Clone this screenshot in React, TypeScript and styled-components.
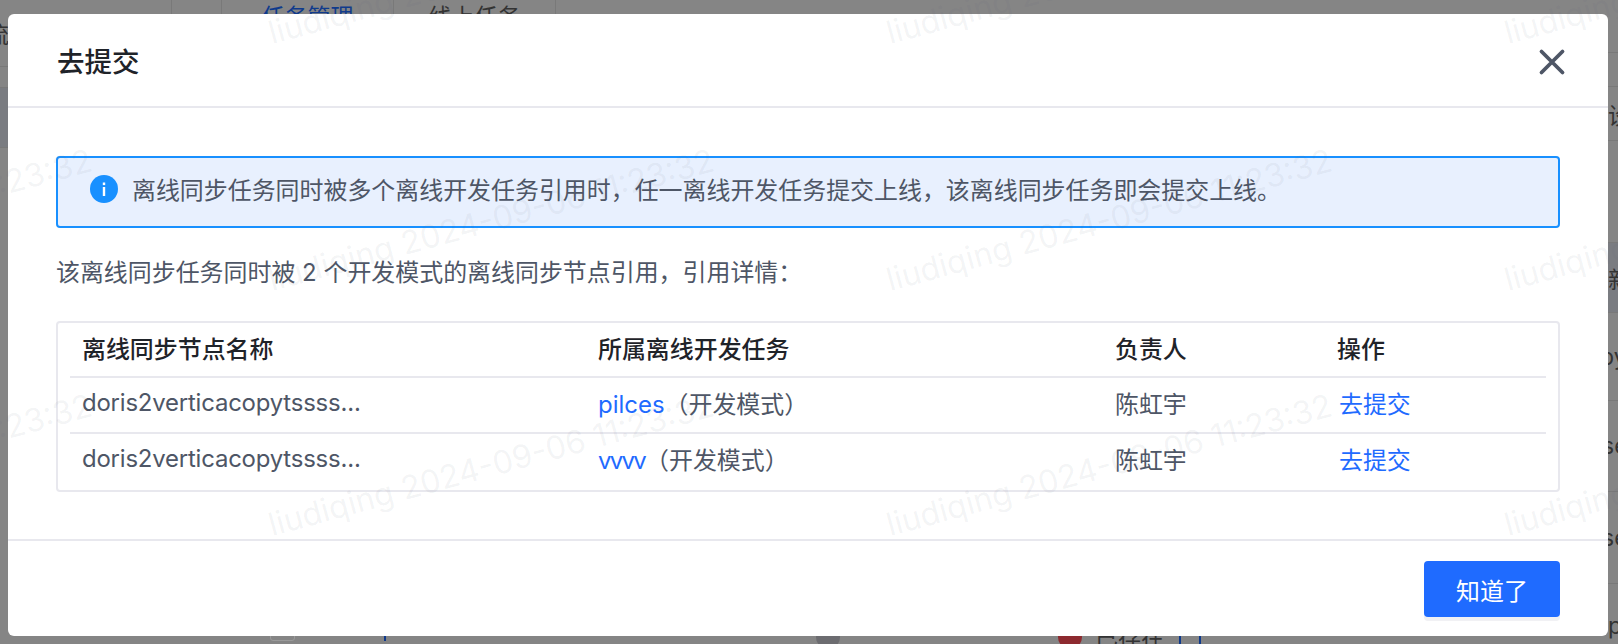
import React from 'react';
import styled, { createGlobalStyle } from 'styled-components';

const GlobalStyle = createGlobalStyle`
  html, body {
    margin: 0;
    padding: 0;
    background: #858585;
  }
`;

const FONT = `Inter, "Noto Sans CJK SC", sans-serif`;

const Page = styled.div`
  position: relative;
  width: 1618px;
  height: 644px;
  overflow: hidden;
  background: #858585;
  font-family: ${FONT};
  padding: 14px 10px 8px 8px;
  box-sizing: border-box;
`;

// dimmed page that shows round the dialog
const Backdrop = styled.div`
  position: absolute;
  inset: 0;
  display: grid;
  grid-template-columns: 8px 1fr 10px;
  grid-template-rows: 14px 1fr 20px;
  grid-template-areas:
    'left top right'
    'left mid right'
    'left bottom right';
  font-size: 23px;
  color: #333;
`;

const TopTabs = styled.div`
  grid-area: top;
  display: flex;
  align-items: stretch;
`;

const TopCell = styled.div<{ $w: number; $blue?: boolean }>`
  width: ${({ $w }) => $w}px;
  box-sizing: border-box;
  border-right: 1px solid #797979;
  display: flex;
  justify-content: center;
  padding-top: 2px;
  line-height: 30px;
  white-space: nowrap;
  color: ${({ $blue }) => ($blue ? '#0f3a8c' : '#333')};
`;

const Edge = styled.div<{ $area: string }>`
  grid-area: ${({ $area }) => $area};
  display: flex;
  flex-direction: column;
  overflow: hidden;
`;

const EdgeRow = styled.div<{ $h: number; $band?: boolean; $indent?: number }>`
  flex: none;
  height: ${({ $h }) => $h}px;
  box-sizing: border-box;
  border-bottom: 1px solid #797979;
  background: ${({ $band }) => ($band ? '#7a7c81' : 'transparent')};
  display: flex;
  align-items: center;
  white-space: nowrap;
  text-indent: ${({ $indent }) => $indent ?? 0}px;
`;

const BottomStrip = styled.div`
  grid-area: bottom;
  display: grid;
  grid-template-columns: 262px 25px 89px 2px 430px 24px 218px 24px 13px 70px 14px 22px;
  align-items: start;
  padding-top: 1px;
`;

const StripBox = styled.i`
  height: 14px;
  border: 1px solid #9a9a9a;
  border-radius: 3px;
`;

const StripBar = styled.i`
  height: 16px;
  background: #0f3a8c;
`;

const StripDot = styled.i<{ $color: string }>`
  height: 24px;
  border-radius: 50%;
  background: ${({ $color }) => $color};
`;

const StripText = styled.span`
  line-height: 26px;
  white-space: nowrap;
`;

const StripCheck = styled.i`
  height: 20px;
  border: 2px solid #0f3a8c;
`;

const Modal = styled.div`
  position: relative;
  height: 100%;
  background: #fff;
  border-radius: 6px;
  display: flex;
  flex-direction: column;
`;

const ModalHeader = styled.header`
  height: 94px;
  flex: none;
  box-sizing: border-box;
  padding: 0 42px 0 49px;
  display: flex;
  align-items: center;
  justify-content: space-between;
  border-bottom: 2px solid #e8e8ee;
`;

const Title = styled.h2`
  margin: 0;
  font-size: 27.5px;
  font-weight: 500;
  color: #1f2329;
`;

const CloseButton = styled.button`
  width: 28px;
  height: 28px;
  margin-top: 4px;
  padding: 0;
  border: 0;
  background: none;
  color: #4e5666;
`;

const ModalBody = styled.div`
  flex: 1;
  padding: 48px 48px 0 48px;
`;

const Alert = styled.div`
  height: 72px;
  box-sizing: border-box;
  border: 2px solid #1890ff;
  border-radius: 4px;
  background: #e8f0fe;
  padding: 16px 32px;
  display: flex;
  gap: 14px;
  color: #4e5666;
  font-size: 23.95px;
  line-height: 34px;
`;

const Intro = styled.p`
  margin: 27px 0 0;
  color: #4e5666;
  font-size: 23.95px;
  line-height: 36px;
`;

const TableCard = styled.div`
  margin-top: 30px;
  border: 2px solid #e8e8ee;
  border-radius: 4px;
  padding: 0 12px 2px;
`;

const Row = styled.div<{ $head?: boolean }>`
  display: grid;
  grid-template-columns: 516px 517px 222px 1fr;
  height: ${({ $head }) => ($head ? 49 : 48)}px;
  padding: 0 0 ${({ $head }) => ($head ? 4 : 6)}px 12px;
  align-items: center;
  color: ${({ $head }) => ($head ? '#1f2329' : '#4e5666')};
  font-weight: ${({ $head }) => ($head ? 500 : 400)};
  font-size: 23.95px;
  & + & {
    border-top: 2px solid #e8e8ee;
  }
`;

const NodeName = styled.span`
  letter-spacing: -0.2px;
`;

const TaskLink = styled.a<{ $tight?: boolean }>`
  color: #1f6bff;
  letter-spacing: ${({ $tight }) => ($tight ? '-1.7px' : 'normal')};
`;

const ActionLink = styled(TaskLink)`
  margin-left: 2px;
`;

const ModalFooter = styled.footer`
  flex: none;
  height: 97px;
  box-sizing: border-box;
  border-top: 2px solid #e8e8ee;
  padding: 20px 48px 0 0;
  display: flex;
  justify-content: flex-end;
  align-items: flex-start;
`;

const PrimaryButton = styled.button`
  width: 136px;
  height: 56px;
  border: 0;
  border-radius: 4px;
  background: #1f6bff;
  box-shadow: 0 4px 0 #f1f1f4;
  color: #fff;
  font-family: inherit;
  font-size: 23.95px;
`;

const InfoDot = styled.svg`
  width: 28px;
  height: 28px;
  flex: none;
  margin-top: 1px;
`;

// repeated name stamp that lies over the whole page
const WatermarkLayer = styled.div`
  position: absolute;
  left: -348px;
  top: 13px;
  display: grid;
  grid-template-columns: 622px repeat(3, 618px);
  grid-template-rows: 247px 245px 100px;
  pointer-events: none;
`;

const Watermark = styled.span`
  justify-self: start;
  align-self: start;
  font-size: 32.2px;
  color: rgba(90, 100, 120, 0.07);
  white-space: nowrap;
  transform: rotate(-15.2deg);
  transform-origin: left bottom;
`;

const rows = [
  { task: 'pilces', tight: false },
  { task: 'vvvv', tight: true },
];

const rightEdge = [
  { h: 53 },
  { h: 34 },
  { h: 54, text: '设' },
  { h: 102 },
  { h: 70, text: '新', band: true },
  { h: 88, text: 'py', indent: -8 },
  { h: 91, text: 'se', indent: -6 },
  { h: 92, text: 'se', indent: -6 },
  { h: 84, text: 'pl' },
];

export default function App() {
  return (
    <Page>
      <GlobalStyle />
      <Backdrop>
        <Edge $area="left">
          <EdgeRow $h={67} $indent={-14}>流</EdgeRow>
          <EdgeRow $h={21} />
          <EdgeRow $h={60} $band />
        </Edge>
        <TopTabs>
          <TopCell $w={164} />
          <TopCell $w={50} />
          <TopCell $w={172} $blue>任务管理</TopCell>
          <TopCell $w={162}>线上任务</TopCell>
        </TopTabs>
        <BottomStrip>
          <span />
          <StripBox />
          <span />
          <StripBar />
          <span />
          <StripDot $color="#6c6c70" />
          <span />
          <StripDot $color="#8d2a2f" />
          <span />
          <StripText>已存在</StripText>
          <span />
          <StripCheck />
        </BottomStrip>
        <Edge $area="right">
          {rightEdge.map((r, i) => (
            <EdgeRow key={i} $h={r.h} $band={r.band} $indent={r.indent}>{r.text}</EdgeRow>
          ))}
        </Edge>
      </Backdrop>
      <Modal>
        <ModalHeader>
          <Title>去提交</Title>
          <CloseButton aria-label="close">
            <svg width="28" height="28" viewBox="0 0 28 28" fill="none" stroke="currentColor" strokeWidth="3.8" strokeLinecap="round">
              <path d="M3.5 3.5L24.5 24.5M24.5 3.5L3.5 24.5" />
            </svg>
          </CloseButton>
        </ModalHeader>
        <ModalBody>
          <Alert>
            <InfoDot viewBox="0 0 28 28">
              <circle cx="14" cy="14" r="14" fill="#1890ff" />
              <rect x="12.8" y="12" width="2.4" height="9" fill="#fff" />
              <rect x="12.8" y="7.5" width="2.4" height="2.6" fill="#fff" />
            </InfoDot>
            离线同步任务同时被多个离线开发任务引用时，任一离线开发任务提交上线，该离线同步任务即会提交上线。
          </Alert>
          <Intro>该离线同步任务同时被 2 个开发模式的离线同步节点引用，引用详情：</Intro>
          <TableCard>
            <Row $head>
              <span>离线同步节点名称</span>
              <span>所属离线开发任务</span>
              <span>负责人</span>
              <span>操作</span>
            </Row>
            {rows.map((r) => (
              <Row key={r.task}>
                <NodeName>doris2verticacopytssss...</NodeName>
                <span><TaskLink $tight={r.tight}>{r.task}</TaskLink>（开发模式）</span>
                <span>陈虹宇</span>
                <span><ActionLink>去提交</ActionLink></span>
              </Row>
            ))}
          </TableCard>
        </ModalBody>
        <ModalFooter>
          <PrimaryButton>知道了</PrimaryButton>
        </ModalFooter>
      </Modal>
      <WatermarkLayer>
        {Array.from({ length: 12 }, (_, i) => (
          <Watermark key={i}>liudiqing 2024-09-06 11:23:32</Watermark>
        ))}
      </WatermarkLayer>
    </Page>
  );
}
